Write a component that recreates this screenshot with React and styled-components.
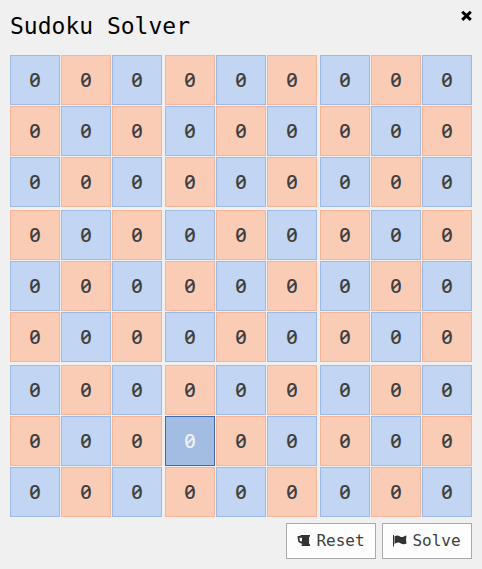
import React, { useState } from "react";
import styled, { createGlobalStyle } from "styled-components";

const GlobalStyle = createGlobalStyle`
  *, *::before, *::after { box-sizing: border-box; }
  body {
    margin: 0;
    background: #f0f0f0;
    color: #000;
    font-family: "DejaVu Sans Mono", monospace;
  }
`;

const Panel = styled.main`
  padding: 10px;
`;

const Header = styled.header`
  display: flex;
  justify-content: space-between;
  align-items: flex-start;
  height: 45px;
`;

const Title = styled.h1`
  margin: 0;
  font-size: 23px;
  line-height: 32px;
  font-weight: 400;
`;

const CloseButton = styled.button`
  display: flex;
  padding: 0;
  border: 0;
  background: none;
  color: #000;
  cursor: pointer;
`;

const Board = styled.div`
  display: grid;
  grid-template-columns: repeat(3, 1fr);
  gap: 3px;
`;

const Block = styled.div`
  display: grid;
  grid-template-columns: repeat(3, 1fr);
  gap: 1px;
`;

const tones = {
  blue: { fill: "#c2d5f2", edge: "#9dbae4", ink: "#404040" },
  orange: { fill: "#fbccb5", edge: "#f7b598", ink: "#404040" },
  selected: { fill: "#a3bce2", edge: "#3b6cb3", ink: "#f0f0f0" },
};

const Cell = styled.button`
  aspect-ratio: 1;
  min-width: 0;
  padding: 0;
  border: 1px solid ${(p) => tones[p.$tone].edge};
  background: ${(p) => tones[p.$tone].fill};
  color: ${(p) => tones[p.$tone].ink};
  font-family: "Noto Sans", sans-serif;
  font-size: 20px;
  font-weight: 500;
  font-variant-numeric: slashed-zero;
  line-height: 24px;
  text-align: center;
  outline: none;
  cursor: pointer;
`;

const Actions = styled.footer`
  display: flex;
  justify-content: flex-end;
  gap: 6px;
  margin-top: 6px;
`;

const ActionButton = styled.button`
  display: flex;
  align-items: center;
  justify-content: center;
  gap: 5px;
  min-width: 90px;
  height: 36px;
  padding: 0 8px;
  border: 1px solid #aaa;
  background: #fdfdfd;
  color: #404040;
  font-family: "DejaVu Sans Mono", monospace;
  font-size: 16px;
  line-height: 20px;
  cursor: pointer;
`;

const Icon = styled.svg`
  display: block;
  flex: none;
  fill: #333;
`;

const CloseIcon = () => (
  <Icon width="11" height="11" viewBox="0 0 11 11" aria-hidden="true">
    <path
      d="M2.3 2.8 8.7 8.8M8.7 2.8 2.3 8.8"
      stroke="#000"
      strokeWidth="3"
      strokeLinecap="square"
    />
  </Icon>
);

const MugIcon = () => (
  <Icon width="14" height="14" viewBox="0 0 14 14" aria-hidden="true">
    <path
      fillRule="evenodd"
      d="M3.5 1H13V2.2L12 3.2V9.5L13 10.5V12H4.5V11L5.5 10L3 9L1.5 8L1 6.5L.5 2.5L1.5 2H3.5ZM2.4 3.8L2.8 7L5 7.4V3.8Z"
    />
  </Icon>
);

const FlagIcon = () => (
  <Icon width="14" height="14" viewBox="0 0 14 14" aria-hidden="true">
    <path d="M0 1H1V12.5H0Z" />
    <path d="M1.5 2.5C3 1.2 5.5 1.2 7 2.5C8.5 3.6 10.5 3 12 1.8H13.5L13 5.5L13.5 9.5C12 10.5 9 10.5 7.5 9.3C6 8 4 8.5 1.5 10Z" />
  </Icon>
);

const SIZE = 3;
const thirds = [0, 1, 2];
const emptyBoard = () => Array(81).fill(0);

const fits = (board, at, value) => {
  const row = Math.floor(at / 9);
  const col = at % 9;
  return board.every((other, i) => {
    const r = Math.floor(i / 9);
    const c = i % 9;
    const sameBlock =
      Math.floor(r / SIZE) === Math.floor(row / SIZE) &&
      Math.floor(c / SIZE) === Math.floor(col / SIZE);
    return i === at || other !== value || !(r === row || c === col || sameBlock);
  });
};

const solve = (board) => {
  const at = board.indexOf(0);
  if (at < 0) return board;
  for (let value = 1; value <= 9; value += 1) {
    if (fits(board, at, value)) {
      const solved = solve(board.map((v, i) => (i === at ? value : v)));
      if (solved) return solved;
    }
  }
  return null;
};

export default function App() {
  const [board, setBoard] = useState(emptyBoard);
  const [selected, setSelected] = useState(66);
  const [open, setOpen] = useState(true);

  const enterDigit = (event) => {
    if (/^[0-9]$/.test(event.key)) {
      setBoard(board.map((v, i) => (i === selected ? Number(event.key) : v)));
    }
  };

  const renderCell = (row, col) => {
    const index = row * 9 + col;
    const tone = (row + col) % 2 ? "orange" : "blue";
    return (
      <Cell
        key={index}
        type="button"
        $tone={index === selected ? "selected" : tone}
        aria-label={`Row ${row + 1}, column ${col + 1}: ${board[index]}`}
        aria-pressed={index === selected}
        onClick={() => setSelected(index)}
        onKeyDown={enterDigit}
      >
        {board[index]}
      </Cell>
    );
  };

  return (
    <>
      <GlobalStyle />
      {open && (
        <Panel>
          <Header>
            <Title>Sudoku Solver</Title>
            <CloseButton type="button" aria-label="Close" onClick={() => setOpen(false)}>
              <CloseIcon />
            </CloseButton>
          </Header>
          <Board>
            {thirds.map((blockRow) =>
              thirds.map((blockCol) => (
                <Block key={`${blockRow}-${blockCol}`}>
                  {thirds.map((r) =>
                    thirds.map((c) => renderCell(blockRow * SIZE + r, blockCol * SIZE + c))
                  )}
                </Block>
              ))
            )}
          </Board>
          <Actions>
            <ActionButton type="button" onClick={() => setBoard(emptyBoard())}>
              <MugIcon />
              Reset
            </ActionButton>
            <ActionButton type="button" onClick={() => setBoard(solve(board) || board)}>
              <FlagIcon />
              Solve
            </ActionButton>
          </Actions>
        </Panel>
      )}
    </>
  );
}
